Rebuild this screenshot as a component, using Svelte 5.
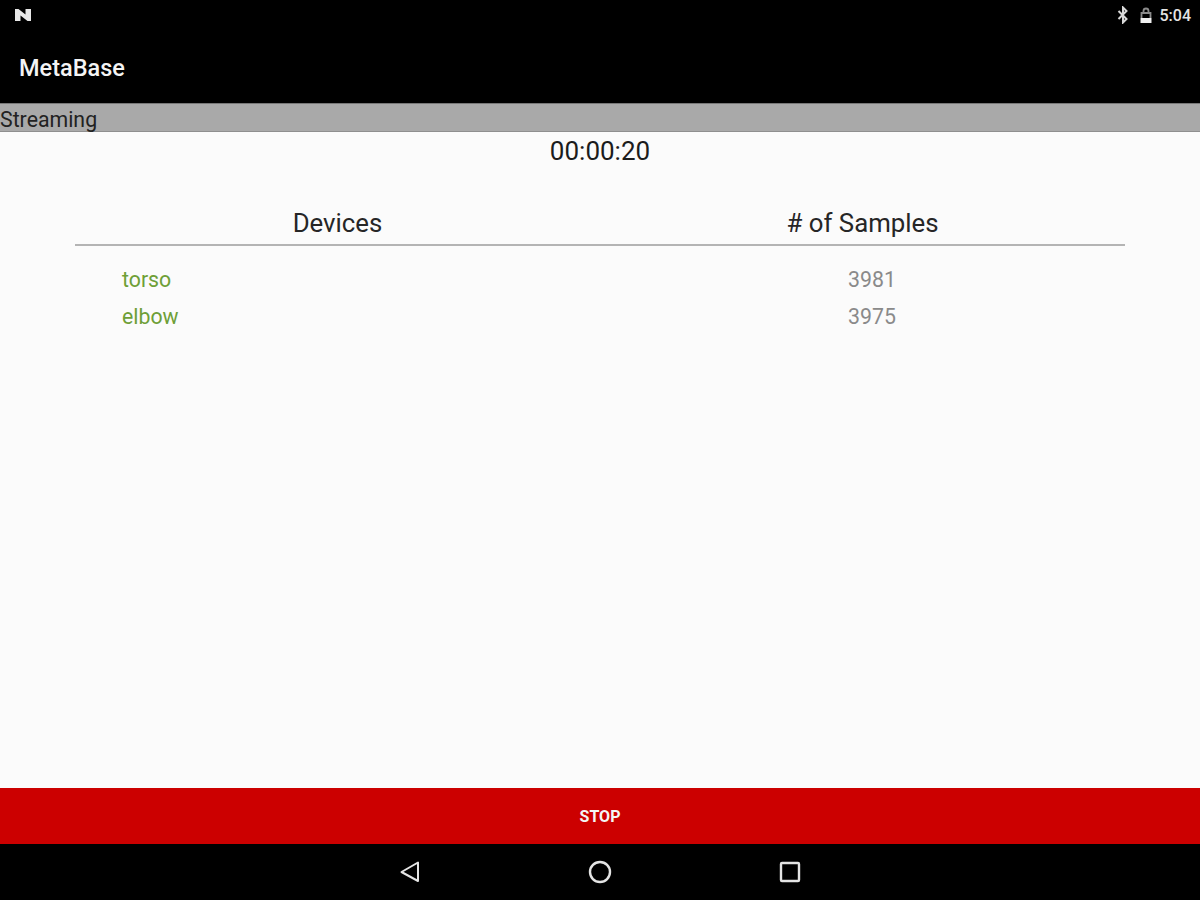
<script lang="ts">
  const rows = [
    { name: "torso", samples: 3981 },
    { name: "elbow", samples: 3975 },
  ];
</script>

<div class="screen">
  <div class="status-bar">
    <svg class="n-logo" width="18" height="14" viewBox="0 0 18 14">
      <path d="M1 13V1h3.500L11.500 6.500V1H17v12h-3.500L6.500 7.500V13z" fill="#e8e8e8" />
    </svg>
    <div class="status-right">
      <svg class="bluetooth" width="12" height="18" viewBox="0 0 12 18">
        <path d="M1.500 5l8 8L6 16.500V1.500L9.500 5l-8 8" fill="none" stroke="#d8d8d8" stroke-width="2" />
      </svg>
      <svg class="lock" width="14" height="18" viewBox="0 0 14 18">
        <path d="M2.500 12V7h9v5M4.500 7V5a2.500 2.500 0 0 1 5 0v2" fill="none" stroke="#8a8a8a" stroke-width="1.800" />
        <rect x="1.500" y="12" width="11" height="5" fill="#f0f0f0" />
      </svg>
      <span class="clock">5:04</span>
    </div>
  </div>

  <div class="app-bar">MetaBase</div>
  <div class="state-bar">Streaming</div>

  <main class="content">
    <div class="timer">00:00:20</div>
    <div class="table">
      <div class="table-head">
        <div class="head-devices">Devices</div>
        <div class="head-samples"># of Samples</div>
      </div>
      {#each rows as row}
        <div class="row">
          <div class="device">{row.name}</div>
          <div class="samples">{row.samples}</div>
        </div>
      {/each}
    </div>
  </main>

  <button class="stop">STOP</button>

  <div class="nav-bar">
    <svg width="24" height="24" viewBox="0 0 24 24">
      <path d="M20 2.500V21L3.500 12z" fill="none" stroke="#e4e4e4" stroke-width="2" stroke-linejoin="round" />
    </svg>
    <svg width="24" height="24" viewBox="0 0 24 24">
      <circle cx="12" cy="12" r="10" fill="none" stroke="#e4e4e4" stroke-width="2.400" />
    </svg>
    <svg width="24" height="24" viewBox="0 0 24 24">
      <rect x="3" y="3" width="18" height="18" rx="1" fill="none" stroke="#e4e4e4" stroke-width="2.400" />
    </svg>
  </div>
</div>

<style>
  :global(body) {
    margin: 0;
    background: #fbfbfb;
  }

  .screen {
    display: flex;
    flex-direction: column;
    width: 1200px;
    height: 900px;
    overflow: hidden;
    font-family: Roboto, "Liberation Sans", sans-serif;
  }

  .status-bar {
    display: flex;
    align-items: center;
    justify-content: space-between;
    height: 32px;
    padding: 0 9px 2px 14px;
    box-sizing: border-box;
    background: #000;
  }

  .n-logo { display: block; }

  .status-right {
    display: flex;
    align-items: center;
  }

  .bluetooth { margin-right: 10px; }
  .lock { margin-right: 7px; }

  .clock {
    color: #e4e4e4;
    font-size: 16px;
    font-weight: 500;
    line-height: 20px;
    padding-top: 2px;
  }

  .app-bar {
    display: flex;
    align-items: center;
    height: 71px;
    padding: 1px 0 0 19px;
    box-sizing: border-box;
    background: #000;
    color: #f4f4f4;
    font-size: 23.5px;
    font-weight: 500;
  }

  .state-bar {
    height: 29px;
    box-sizing: border-box;
    padding-top: 2px;
    border-top: 1px solid #777;
    border-bottom: 1px solid #8f8f8f;
    background: #a9a9a9;
    color: #222;
    font-size: 21.3px;
    line-height: 27px;
  }

  .content {
    flex: 1;
    padding: 0 75px;
    background: #fbfbfb;
  }

  .timer {
    margin-top: 3px;
    color: #1c1c1c;
    font-size: 26px;
    line-height: 32px;
    text-align: center;
  }

  .table-head {
    display: flex;
    height: 57px;
    margin-top: 22px;
    padding-top: 18px;
    box-sizing: border-box;
    border-bottom: 2px solid #b4b4b4;
    color: #262626;
    font-size: 25.8px;
    line-height: 32px;
  }

  .head-devices {
    width: 525px;
    text-align: center;
  }

  .head-samples {
    width: 525px;
    text-align: center;
  }

  .row {
    display: flex;
    height: 37px;
    font-size: 21.3px;
    line-height: 37px;
  }

  .table-head + .row { margin-top: 15px; }

  .device {
    width: 525px;
    padding-left: 47px;
    box-sizing: border-box;
    color: #6e9f37;
  }

  .samples {
    width: 525px;
    padding-left: 19px;
    box-sizing: border-box;
    text-align: center;
    color: #8a8a8a;
  }

  .stop {
    display: block;
    width: 100%;
    height: 56px;
    padding: 0;
    border: none;
    background: #cc0000;
    color: #f5f5f5;
    font-family: inherit;
    font-size: 16px;
    font-weight: 700;
  }

  .nav-bar {
    display: flex;
    align-items: center;
    justify-content: center;
    gap: 166px;
    height: 56px;
    background: #000;
  }
</style>
